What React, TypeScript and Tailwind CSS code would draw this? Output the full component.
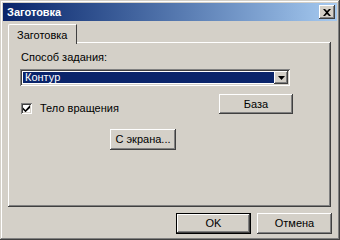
import React from "react";

const raised =
  "shadow-[inset_-1px_-1px_#404040,inset_1px_1px_#ffffff,inset_-2px_-2px_#808080,inset_2px_2px_#d4d0c8]";
const sunken =
  "shadow-[inset_1px_1px_#808080,inset_-1px_-1px_#ffffff,inset_2px_2px_#404040,inset_-2px_-2px_#d4d0c8]";

function Button({ label, className = "", isDefault = false }: { label: string; className?: string; isDefault?: boolean }) {
  return (
    <div
      className={`flex items-center justify-center bg-[#d4d0c8] text-black ${
        isDefault
          ? "shadow-[inset_0_0_0_1px_#000000,inset_-2px_-2px_#404040,inset_2px_2px_#ffffff,inset_-3px_-3px_#808080]"
          : raised
      } ${className}`}
    >
      {label}
    </div>
  );
}

export default function App() {
  return (
    <div
      className="w-[340px] h-[240px] bg-[#d4d0c8] p-[3px] flex flex-col text-[11px] leading-[13px] text-black shadow-[inset_-1px_-1px_#404040,inset_1px_1px_#d4d0c8,inset_-2px_-2px_#808080,inset_2px_2px_#ffffff]"
      style={{ fontFamily: '"Liberation Sans", Arial, sans-serif' }}
    >
      {/* Title bar */}
      <div className="h-[18px] flex items-center justify-between pl-[4px] pr-[2px] bg-linear-to-r from-[#0a246a] to-[#a6caf0]">
        <span className="text-white font-bold text-[11px]">Заготовка</span>
        <div className={`w-[16px] h-[14px] bg-[#d4d0c8] flex items-center justify-center ${raised}`}>
          <svg width="8" height="7" viewBox="0 0 8 7">
            <path d="M0 0h2l2 2 2-2h2L5 3.5 8 7H6L4 5 2 7H0l3-3.5z" fill="#000" />
          </svg>
        </div>
      </div>

      {/* Body */}
      <div className="flex-1 flex flex-col pl-[5px] pr-[6px] pt-[3px]">
        {/* Tab strip */}
        <div className="h-[18px] flex">
          <div className="relative z-10 w-[69px] h-[20px] bg-[#d4d0c8] border-t border-l border-white border-r border-r-[#404040] rounded-tl-[2px] flex items-start pt-[4px] pl-[8px]">
            Заготовка
          </div>
        </div>

        {/* Tab panel */}
        <div className={`h-[165px] flex flex-col pl-[12px] pt-[9px] ${raised}`}>
          <div className="pl-[1px]">Способ задания:</div>

          <div className={`mt-[5px] w-[270px] h-[17px] bg-white p-[2px] flex ${sunken}`}>
            <div className="flex-1 ml-[1px] my-[1px] bg-[#0a246a] text-white flex items-center pl-[2px]">Контур</div>
            <div className={`w-[14px] bg-[#d4d0c8] flex items-center justify-center ${raised}`}>
              <svg width="7" height="4" viewBox="0 0 7 4">
                <path d="M0 0h7L3.5 4z" fill="#000" />
              </svg>
            </div>
          </div>

          <div className="mt-[8px] w-[273px] flex items-start justify-between">
            <div className="flex items-center mt-[8px] ml-[1px]">
              <div className={`w-[11px] h-[11px] bg-white flex items-center justify-center ${sunken}`}>
                <svg width="7" height="7" viewBox="0 0 7 7">
                  <path d="M0 2.5l2.5 2.5L7 0V3L2.5 7.2 0 4.7z" fill="#000" />
                </svg>
              </div>
              <span className="ml-[8px]">Тело вращения</span>
            </div>
            <Button label="База" className="w-[74px] h-[20px]" />
          </div>

          <Button label="С экрана..." className="mt-[14px] ml-[90px] w-[66px] h-[21px]" />
        </div>

        {/* Dialog buttons */}
        <div className="mt-[6px] -mr-[1px] flex justify-end gap-[6px]">
          <Button label="OK" isDefault className="w-[75px] h-[21px]" />
          <Button label="Отмена" className="w-[75px] h-[21px]" />
        </div>
      </div>
    </div>
  );
}
